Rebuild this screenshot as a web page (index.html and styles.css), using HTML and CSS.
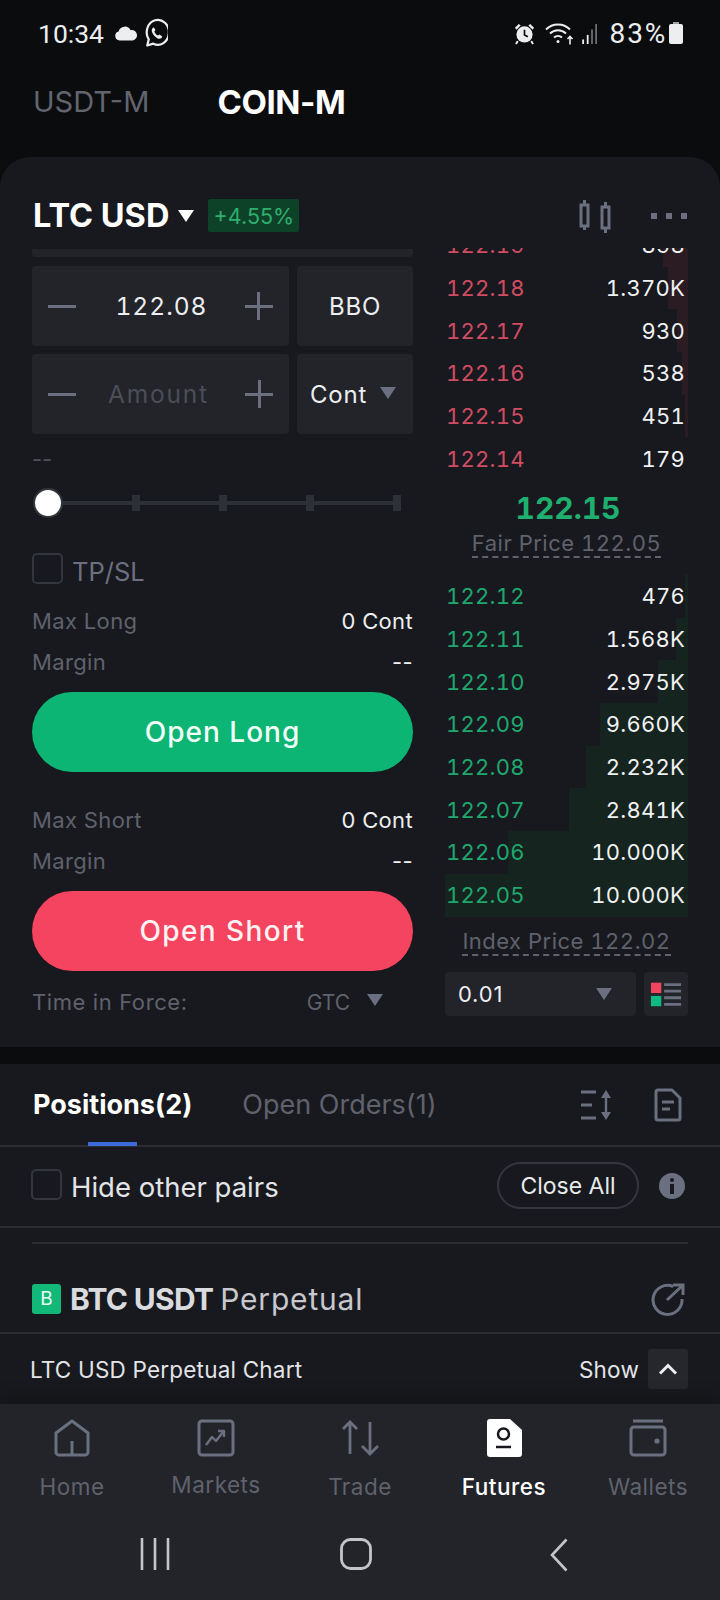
FILE: index.html
```html
<!DOCTYPE html>
<html lang="en">
<head>
<meta charset="utf-8">
<title>LTC USD Futures</title>
<link rel="stylesheet" href="styles.css">
</head>
<body>
<header class="status">
  <div class="status-side">
    <span class="clock">10:34</span>
    <svg class="ic-cloud" viewBox="0 0 26 16"><path d="M6 15.5a5 5 0 0 1-1-9.8A7 7 0 0 1 18 4.4a5.6 5.6 0 0 1 2.5 11.1z" fill="#eceef0"/></svg>
    <svg class="ic-wa" viewBox="0 0 26 32" fill="none" stroke="#eceef0" stroke-width="2.4"><path d="M3.5 29l1.6-6.6A12 13.5 0 1 1 10 27z" stroke-linejoin="round"/><path d="M9 10.5c-1.5 2 .2 5.8 2.6 8.4 2.6 2.6 5.6 3.6 7.4 2l.8-1.6-3-2.3-1.6 1.2c-1.8-.8-3.4-2.6-4-4.5l1.2-1.5-1.8-3z" fill="#eceef0" stroke="none"/></svg>
  </div>
  <div class="status-side">
    <svg class="ic-alarm" viewBox="0 0 22 24"><path d="M1 6l4-4 2 1.5-4.500 4.500zM21 6l-4-4-2 1.500 4.500 4.500z" fill="#eceef0"/><circle cx="11" cy="13" r="8.5" fill="#eceef0"/><path d="M11 8v5.500l3.500 2" stroke="#101114" stroke-width="1.8" fill="none"/><path d="M4 20l-2 3M18 20l2 3" stroke="#eceef0" stroke-width="2"/></svg>
    <svg class="ic-wifi" viewBox="0 0 30 24" fill="none" stroke="#eceef0" stroke-width="1.9"><path d="M1 8a17 17 0 0 1 24 0M5 12a11.500 11.500 0 0 1 16 0M9 16a6 6 0 0 1 8 0"/><circle cx="13" cy="20" r="1.5" fill="#eceef0" stroke="none"/><path d="M25 23v-8m-2.500 2.500l2.500-2.500 2.500 2.500" stroke-width="1.6"/></svg>
    <svg class="ic-signal" viewBox="0 0 18 22"><rect x="1" y="17" width="2" height="5" fill="#eceef0"/><rect x="6" y="12" width="2" height="10" fill="#eceef0"/><rect x="11" y="6" width="1.5" height="16" fill="#8a8c90"/><rect x="15.5" y="0" width="1.5" height="22" fill="#8a8c90"/></svg>
    <span class="battery-text">83%</span>
    <svg class="ic-battery" viewBox="0 0 14 22"><rect x="4" y="0" width="6" height="3" fill="#a0a2a6"/><path d="M2 2h10a2 2 0 0 1 2 2v16a2 2 0 0 1-2 2H2a2 2 0 0 1-2-2V4a2 2 0 0 1 2-2z" fill="#eceef0"/></svg>
  </div>
</header>

<nav class="market-tabs">
  <span class="market-tab">USDT-M</span>
  <span class="market-tab market-tab-active">COIN-M</span>
</nav>

<main class="card">
  <div class="card-head">
    <h1 class="pair">LTC USD</h1>
    <span class="caret caret-white"></span>
    <span class="change">+4.55%</span>
    <svg class="ic-candle" viewBox="0 0 34 34" fill="none" stroke="#6b7080" stroke-width="3"><rect x="3" y="6" width="7" height="21"/><rect x="24" y="8" width="7" height="21"/><path d="M6.5 1v5M6.5 27v4M27.5 3v5M27.5 29v5"/></svg>
    <div class="dots"><i></i><i></i><i></i></div>
  </div>

  <div class="trade">
    <section class="form">
      <div class="sliver"></div>
      <div class="input-row">
        <div class="stepper">
          <span class="minus"></span><span class="value">122.08</span><span class="plus"></span>
        </div>
        <div class="unit">BBO</div>
      </div>
      <div class="input-row">
        <div class="stepper">
          <span class="minus"></span><span class="value value-ph">Amount</span><span class="plus"></span>
        </div>
        <div class="unit unit-select">Cont <span class="caret caret-gray"></span></div>
      </div>
      <div class="dash-line">--</div>
      <div class="slider">
        <span class="thumb"></span>
        <i></i><i></i><i></i><i></i>
      </div>
      <label class="tpsl"><span class="check"></span><span class="tpsl-text">TP/SL</span></label>
      <div class="info first"><span>Max Long</span><b>0 Cont</b></div>
      <div class="info"><span>Margin</span><b>--</b></div>
      <button class="action long">Open Long</button>
      <div class="info second"><span>Max Short</span><b>0 Cont</b></div>
      <div class="info"><span>Margin</span><b>--</b></div>
      <button class="action short">Open Short</button>
      <div class="tif"><span>Time in Force:</span><span class="tif-value">GTC <span class="caret caret-gray"></span></span></div>
    </section>

    <section class="book">
      <div class="asks">
        <div class="row ask"><em class="bar" style="width:25px"></em><span>122.19</span><b>898</b></div>
        <div class="row ask"><em class="bar" style="width:20px"></em><span>122.18</span><b>1.370K</b></div>
        <div class="row ask"><em class="bar" style="width:11px"></em><span>122.17</span><b>930</b></div>
        <div class="row ask"><em class="bar" style="width:6px"></em><span>122.16</span><b>538</b></div>
        <div class="row ask"><em class="bar" style="width:3px"></em><span>122.15</span><b>451</b></div>
        <div class="row ask"><span>122.14</span><b>179</b></div>
      </div>
      <div class="last-price">122.15</div>
      <div class="ref-wrap"><span class="ref">Fair Price 122.05</span></div>
      <div class="bids">
        <div class="row bid"><em class="bar" style="width:3px"></em><span>122.12</span><b>476</b></div>
        <div class="row bid"><em class="bar" style="width:12px"></em><span>122.11</span><b>1.568K</b></div>
        <div class="row bid"><em class="bar" style="width:30px"></em><span>122.10</span><b>2.975K</b></div>
        <div class="row bid"><em class="bar" style="width:88px"></em><span>122.09</span><b>9.660K</b></div>
        <div class="row bid"><em class="bar" style="width:102px"></em><span>122.08</span><b>2.232K</b></div>
        <div class="row bid"><em class="bar" style="width:119px"></em><span>122.07</span><b>2.841K</b></div>
        <div class="row bid"><em class="bar" style="width:180px"></em><span>122.06</span><b>10.000K</b></div>
        <div class="row bid"><em class="bar" style="width:243px"></em><span>122.05</span><b>10.000K</b></div>
      </div>
      <div class="ref-wrap ref-index"><span class="ref">Index Price 122.02</span></div>
      <div class="book-tools">
        <div class="precision"><span>0.01</span><span class="caret caret-gray"></span></div>
        <div class="layout-toggle">
          <svg viewBox="0 0 34 28"><rect x="1" y="2" width="11" height="11" fill="#f0465f"/><rect x="1" y="16" width="11" height="11" fill="#10b981"/><path d="M15 4h18M15 11h18M15 18h18M15 25h18" stroke="#6b7080" stroke-width="3"/></svg>
        </div>
      </div>
    </section>
  </div>
</main>

<section class="positions">
  <div class="pos-tabs">
    <span class="pos-tab pos-tab-active">Positions(2)</span>
    <span class="pos-tab">Open Orders(1)</span>
    <svg class="ic-sort" viewBox="0 0 32 32" fill="none" stroke="#6b7080" stroke-width="3"><path d="M0 3h15M0 16h11M0 29h15"/><path d="M25 8v17" stroke-width="2.4"/><path d="M25 1l5 8H20zM25 31l5-8H20z" fill="#6b7080" stroke="none"/></svg>
    <svg class="ic-doc" viewBox="0 0 28 34" fill="none" stroke="#6b7080" stroke-width="3" stroke-linejoin="round"><path d="M4 2h14l8 8v20a2 2 0 0 1-2 2H4a2 2 0 0 1-2-2V4a2 2 0 0 1 2-2z"/><path d="M8 14h12M8 21h8"/></svg>
    <span class="underline"></span>
  </div>
  <div class="hide-row">
    <span class="check"></span>
    <span class="hide-label">Hide other pairs</span>
    <button class="close-all">Close All</button>
    <svg class="ic-info" viewBox="0 0 26 26"><circle cx="13" cy="13" r="13" fill="#6b7080"/><circle cx="13" cy="7" r="2" fill="#191a1f"/><rect x="11" y="11" width="4" height="10" fill="#191a1f"/></svg>
  </div>
  <div class="inner-rule"></div>
  <div class="position-title">
    <span class="side-badge">B</span>
    <strong>BTC USDT</strong>
    <span class="perp">Perpetual</span>
    <svg class="ic-share" viewBox="0 0 34 34" fill="none" stroke="#6b7080" stroke-width="3"><path d="M22 4.500A14.500 14.500 0 1 0 31 17"/><path d="M16 18L31 4M22 3h10v10"/></svg>
  </div>
  <div class="chart-row">
    <span class="chart-label">LTC USD Perpetual Chart</span>
    <span class="chart-show">Show</span>
    <span class="chart-btn"><svg viewBox="0 0 20 12" fill="none" stroke="#eceef0" stroke-width="3"><path d="M2 10.5l8-8 8 8"/></svg></span>
  </div>
</section>

<footer class="bottom">
  <nav class="app-nav">
    <a class="nav-item">
      <svg viewBox="0 0 38 38" fill="none" stroke="#6b7080" stroke-width="3" stroke-linejoin="round"><path d="M19 2L35 14v19a3 3 0 0 1-3 3H6a3 3 0 0 1-3-3V14z"/><path d="M19 22v13"/></svg>
      <span>Home</span>
    </a>
    <a class="nav-item nav-up">
      <svg viewBox="0 0 38 38" fill="none" stroke="#6b7080" stroke-width="3" stroke-linejoin="round"><rect x="2" y="2" width="34" height="34" rx="3"/><path d="M9 26l6-8 4 4 7-9M21 12h6v6" stroke-width="2.4"/></svg>
      <span>Markets</span>
    </a>
    <a class="nav-item">
      <svg viewBox="0 0 38 38" fill="none" stroke="#6b7080" stroke-width="2.8"><path d="M9 35V3M2 10l7-7 7 7"/><path d="M29 3v32M21 27l8 8 8-8"/></svg>
      <span>Trade</span>
    </a>
    <a class="nav-item nav-active">
      <svg viewBox="0 0 36 38"><path d="M4 0h20l12 11v24a3 3 0 0 1-3 3H4a3 3 0 0 1-3-3V3a3 3 0 0 1 3-3z" fill="#fff"/><circle cx="17.5" cy="15" r="5.5" fill="none" stroke="#17181c" stroke-width="2.5"/><path d="M10 28h15" stroke="#17181c" stroke-width="2.5"/></svg>
      <span>Futures</span>
    </a>
    <a class="nav-item">
      <svg viewBox="0 0 38 38" fill="none" stroke="#6b7080" stroke-width="3"><path d="M4 2h30"/><rect x="2" y="8" width="34" height="28" rx="3"/><circle cx="28" cy="22" r="2.6" fill="#6b7080" stroke="none"/></svg>
      <span>Wallets</span>
    </a>
  </nav>
  <div class="sys-nav">
    <svg class="sys-recent" viewBox="0 0 30 32" fill="none" stroke="#c4c5c8" stroke-width="2.6"><path d="M2 0v32M15 0v32M28 0v32"/></svg>
    <svg class="sys-home" viewBox="0 0 32 32" fill="none" stroke="#c4c5c8" stroke-width="2.8"><rect x="1.5" y="1.5" width="29" height="29" rx="9"/></svg>
    <svg class="sys-back" viewBox="0 0 18 34" fill="none" stroke="#c4c5c8" stroke-width="2.6"><path d="M16.5 1.5L2 17l14.5 15.5"/></svg>
  </div>
</footer>
</body>
</html>
```

FILE: styles.css
```css
* { box-sizing: border-box; }
html, body { margin: 0; padding: 0; }
body {
  width: 720px;
  height: 1600px;
  overflow: hidden;
  display: flex;
  flex-direction: column;
  background: #0b0c0e;
  color: #eceef0;
  font-family: Inter, "Liberation Sans", sans-serif;
}
svg { display: block; flex: none; }
b { font-weight: 400; }

/* status bar */
.status {
  height: 66px;
  padding: 0 37px 0 38px;
  display: flex;
  justify-content: space-between;
  align-items: center;
}
.status-side { display: flex; align-items: center; }
.clock, .battery-text { font-family: Roboto, sans-serif; font-size: 26.5px; color: #eceef0; }
.ic-cloud { width: 24px; height: 15px; margin-left: 10px; }
.ic-wa { width: 24px; height: 31px; margin-left: 6px; }
.ic-alarm { width: 21px; height: 25px; }
.ic-wifi { width: 30px; height: 25px; margin-left: 10px; }
.ic-signal { width: 19px; height: 20px; margin: 2px 0 0 5px; }
.battery-text { margin-left: 11px; font-size: 28px; letter-spacing: 1.8px; }
.ic-battery { width: 14px; height: 22px; margin-left: 2px; }

/* market tabs */
.market-tabs {
  height: 91px;
  padding: 0 0 20px 33px;
  display: flex;
  align-items: center;
  gap: 68px;
}
.market-tab { font-size: 29px; color: #62656f; letter-spacing: 0; }
.market-tab-active { font-size: 33px; font-weight: 700; color: #fff; letter-spacing: -0.4px; }

/* main card */
.card {
  height: 890px;
  flex: none;
  background: #18191e;
  border-radius: 30px 30px 0 0;
}
.card-head {
  height: 91px;
  padding: 26px 33px 0;
  display: flex;
  align-items: center;
}
.pair { margin: 0; font-size: 32.5px; font-weight: 700; color: #fff; letter-spacing: 0; }
.caret {
  display: inline-block;
  width: 0;
  height: 0;
  border-left: 8.5px solid transparent;
  border-right: 8.5px solid transparent;
  border-top: 12px solid #6b7080;
}
.caret-white { border-top-color: #fff; margin-left: 9px; }
.change {
  margin-left: 14px;
  height: 33px;
  width: 91px;
  background: #0d4229;
  color: #2fae6e;
  font-size: 21.5px;
  display: flex;
  align-items: center;
  justify-content: center;
  border-radius: 2px;
}
.ic-candle { width: 34px; height: 34px; margin-left: auto; }
.dots { display: flex; gap: 9px; margin-left: 39px; }
.dots i { width: 6px; height: 6px; background: #6b7080; }

.trade {
  height: 799px;
  padding: 0 32px;
  display: grid;
  grid-template-columns: 381px 243px;
  column-gap: 32px;
  overflow: hidden;
}

/* order form */
.form { display: flex; flex-direction: column; }
.sliver { height: 8px; margin: 1px 0 9px; background: #22242a; border-radius: 0 0 4px 4px; }
.input-row { display: grid; grid-template-columns: 257px 116px; column-gap: 8px; height: 80px; margin-bottom: 8px; }
.stepper, .unit { background: #22242a; border-radius: 4px; display: flex; align-items: center; }
.stepper { padding: 0 16px; justify-content: space-between; }
.minus, .plus { position: relative; width: 28px; height: 28px; flex: none; }
.minus::before, .plus::before {
  content: "";
  position: absolute;
  left: 0;
  right: 0;
  top: 12.5px;
  height: 3px;
  background: #6b7080;
}
.plus::after {
  content: "";
  position: absolute;
  top: 0;
  bottom: 0;
  left: 12.5px;
  width: 3px;
  background: #6b7080;
}
.value { font-size: 24.5px; letter-spacing: 1px; color: #eceef0; font-variant-numeric: tabular-nums; margin-right: -2px; }
.value-ph { color: #4b4e58; letter-spacing: 1.8px; margin-right: 4px; }
.unit { justify-content: center; font-size: 24px; color: #eceef0; letter-spacing: 0.8px; }
.unit-select { gap: 13px; padding-right: 4px; }
.unit-select .caret { margin-top: -3px; }
.dash-line { height: 40px; margin-top: -8px; padding-top: 9px; font-size: 22px; line-height: 32px; color: #4f525c; }
.slider {
  position: relative;
  height: 42px;
  margin-top: 8px;
  padding: 0 12px 0 16px;
  display: flex;
  align-items: center;
  justify-content: space-between;
  background: linear-gradient(#2e3037, #2e3037) no-repeat 16px center / 353px 4px;
}
.slider i { width: 8px; height: 16px; background: #2e3037; }
.slider i:first-of-type { margin-left: 84px; }
.thumb {
  position: absolute;
  left: 1px;
  top: 6px;
  width: 30px;
  height: 30px;
  border-radius: 50%;
  background: #fff;
  border: 2px solid #33363d;
}
.tpsl { display: flex; align-items: flex-start; height: 31px; margin-top: 29px; gap: 9px; font-size: 25.5px; color: #6b7080; }
.tpsl-text { padding-top: 3px; line-height: 31px; }
.check {
  display: block;
  flex: none;
  width: 31px;
  height: 31px;
  border: 2px solid #33363d;
  border-radius: 5px;
}
.info {
  height: 41px;
  display: flex;
  justify-content: space-between;
  align-items: center;
  font-size: 22px;
  letter-spacing: 0.35px;
  color: #5f626d;
}
.info b { color: #eceef0; }
.info.first { margin-top: 16px; }
.info.second { margin-top: 27px; }
.action {
  flex: none;
  height: 80px;
  margin-top: 10px;
  border: 0;
  border-radius: 40px;
  color: #f2fff8;
  font: 500 28px Inter, "Liberation Sans", sans-serif;
  letter-spacing: 1px;
}
.long { background: #0cb574; }
.short { background: #f5445f; color: #fff2f2; letter-spacing: 1.4px; }
.tif {
  height: 62px;
  display: flex;
  justify-content: space-between;
  align-items: center;
  font-size: 22px;
  letter-spacing: 0.6px;
  color: #5f626d;
  padding-right: 30px;
}
.tif-value { display: flex; align-items: center; gap: 17px; letter-spacing: 0; font-size: 21px; }
.tif-value .caret { margin-top: -4px; }

/* order book */
.book { display: flex; flex-direction: column; min-width: 0; }
.asks { height: 232px; flex: none; display: flex; flex-direction: column; justify-content: flex-end; overflow: hidden; }
.row {
  position: relative;
  flex: none;
  height: 42.7px;
  padding: 0 3px 0 1px;
  display: flex;
  justify-content: space-between;
  align-items: center;
  font-size: 22px;
  letter-spacing: 0.25px;
  font-variant-numeric: tabular-nums;
}
.row span, .row b { position: relative; }
.row b { color: #f0f1f3; }
.ask span { color: #d04c62; }
.bid span { color: #1fa86e; }
.bar { position: absolute; top: 0; right: 0; bottom: 0; }
.ask .bar { background: #2a1c22; }
.bid .bar { background: #16241f; }
.last-price { height: 50px; flex: none; padding: 4px 0 0 3px; text-align: center; font-size: 30px; font-weight: 700; line-height: 48px; font-variant-numeric: tabular-nums; color: #1fb06f; }
.ref-wrap { height: 28px; flex: none; text-align: center; }
.ref {
  display: inline-block;
  height: 28px;
  font-size: 22px;
  line-height: 27px;
  color: #5f626d;
  letter-spacing: 0.5px;
  font-variant-numeric: tabular-nums;
  border-bottom: 2px dashed #5f626d;
}
.bids { margin-top: 17px; display: flex; flex-direction: column; }
.ref-index { height: 39px; padding-top: 11px; }
.book-tools { display: flex; gap: 8px; height: 44px; margin-top: 16px; }
.precision {
  flex: 1;
  padding: 0 24px 0 13px;
  background: #22242a;
  border-radius: 4px;
  display: flex;
  justify-content: space-between;
  align-items: center;
  font-size: 22px;
  letter-spacing: 0.8px;
}
.layout-toggle { width: 44px; background: #22242a; border-radius: 4px; padding: 8px 6px; }
.layout-toggle svg { width: 32px; height: 28px; }

/* positions panel */
.positions { height: 340px; flex: none; margin-top: 17px; background: #18191e; }
.pos-tabs {
  position: relative;
  height: 83px;
  padding: 0 38px 0 33px;
  display: flex;
  align-items: center;
  border-bottom: 2px solid #2b2d33;
}
.pos-tab { font-size: 27px; color: #5f626d; margin-right: 50px; }
.pos-tab-active { font-weight: 700; color: #fff; }
.ic-sort { width: 32px; height: 32px; margin-left: auto; }
.ic-doc { width: 28px; height: 34px; margin-left: 41px; }
.underline { position: absolute; left: 88px; bottom: -1px; width: 49px; height: 4px; background: #3a6ad8; }
.hide-row {
  height: 81px;
  padding: 0 35px 0 31px;
  display: flex;
  align-items: center;
  border-bottom: 2px solid #2b2d33;
}
.hide-row .check { margin-top: -5px; }
.hide-label { margin-left: 9px; font-size: 27.5px; color: #e2e4e8; margin-top: 1px; }
.close-all {
  margin-left: auto;
  width: 142px;
  height: 47px;
  border: 2px solid #33363d;
  border-radius: 24px;
  background: none;
  color: #e8eaec;
  font: 400 23px Inter, "Liberation Sans", sans-serif;
  margin-top: -2px;
}
.ic-info { width: 26px; height: 26px; margin-left: 20px; margin-top: -2px; }
.inner-rule { height: 2px; margin: 14px 32px 0; background: #2b2d33; }
.position-title {
  height: 90px;
  padding: 22px 35px 0 32px;
  display: flex;
  align-items: center;
  border-bottom: 2px solid #2b2d33;
  font-size: 30px;
  letter-spacing: 0.8px;
}
.side-badge {
  width: 29px;
  height: 30px;
  background: #12b877;
  border-radius: 3px;
  color: #e9fff5;
  font-size: 19px;
  text-align: center;
  line-height: 30px;
  letter-spacing: 0;
}
.position-title strong { margin-left: 9px; font-weight: 700; color: #d9dbdf; letter-spacing: -0.7px; }
.perp { margin-left: 7px; color: #c6c8cd; }
.ic-share { width: 34px; height: 34px; margin-left: auto; }
.chart-row {
  height: 70px;
  padding: 0 32px 0 30px;
  display: flex;
  align-items: center;
  font-size: 22.5px;
  letter-spacing: 0.2px;
  color: #e2e4e8;
}
.chart-show { margin-left: auto; }
.chart-btn {
  width: 40px;
  height: 40px;
  margin-left: 9px;
  background: #25272d;
  border-radius: 3px;
  display: flex;
  align-items: center;
  justify-content: center;
}
.chart-btn svg { width: 20px; height: 12px; }

/* bottom navigation */
.bottom { flex: 1; background: #22242a; box-shadow: 0 -8px 14px rgba(0, 0, 0, 0.22); position: relative; }
.app-nav { display: grid; grid-template-columns: repeat(5, 144px); padding-top: 15px; }
.nav-item {
  display: flex;
  flex-direction: column;
  align-items: center;
  font-size: 22.5px;
  color: #5f626d;
  letter-spacing: 0.5px;
}
.nav-item svg { width: 38px; height: 38px; margin-bottom: 16px; }
.nav-up span { margin-top: -2px; }
.nav-active { color: #fff; font-weight: 500; }
.sys-nav { position: relative; height: 60px; margin-top: 38px; }
.sys-nav svg { position: absolute; top: 0; }
.sys-recent { left: 140px; width: 30px; height: 32px; }
.sys-home { left: 340px; width: 32px; height: 32px; }
.sys-back { left: 550px; width: 18px; height: 34px; }
```
